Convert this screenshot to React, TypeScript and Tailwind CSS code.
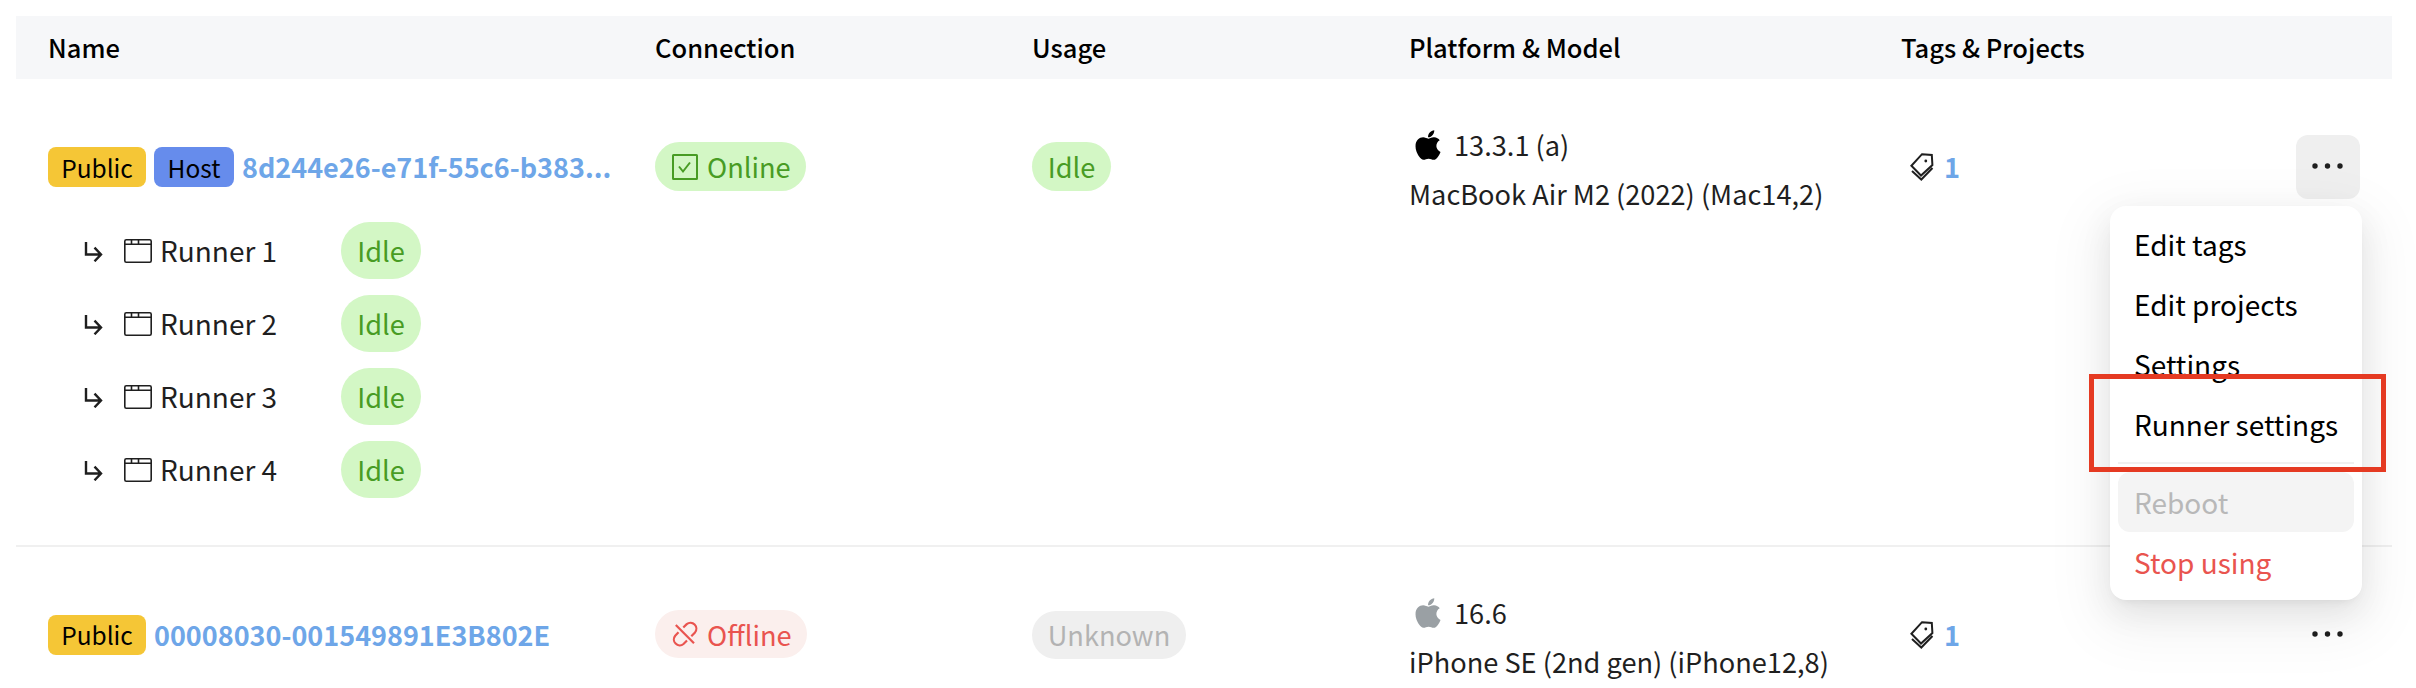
import React from "react";

type SvgProps = { className?: string };

const Apple = ({ className }: SvgProps) => (
  <svg className={className} viewBox="0 0 384 512" fill="currentColor">
    <path d="M318.700 268.700c-.2-36.700 16.400-64.400 50-84.800-18.800-26.900-47.200-41.700-84.700-44.600-35.500-2.800-74.300 20.700-88.500 20.700-15 0-49.400-19.700-76.400-19.700C63.300 141.200 4 184.800 4 273.500q0 39.300 14.400 81.200c12.800 36.700 59 126.700 107.200 125.200 25.200-.6 43-17.900 75.800-17.900 31.800 0 48.300 17.900 76.400 17.900 48.600-.7 90.400-82.500 102.600-119.300-65.200-30.700-61.700-90-61.700-91.900zm-56.600-164.200c27.300-32.400 24.800-61.900 24-72.500-24.100 1.400-52 16.400-67.900 34.900-17.500 19.800-27.800 44.300-25.600 71.900 26.100 2 49.900-11.400 69.500-34.300z" />
  </svg>
);

const Branch = ({ className }: SvgProps) => (
  <svg className={className} viewBox="0 0 20 20" fill="none" stroke="currentColor" strokeWidth="2.4">
    <path d="M2 0v12.500h15M10.500 5.700l6.500 6.800-6.500 6.800" />
  </svg>
);

const WindowIcon = ({ className }: SvgProps) => (
  <svg className={className} viewBox="0 0 28 24" fill="none" stroke="currentColor" strokeWidth="1.600">
    <rect x=".8" y=".8" width="26.400" height="22.400" rx="1.500" />
    <path d="M.8 5.200h26.400M7.500 .8v4.400M14.500 .8v4.400" />
  </svg>
);

const CheckSquare = ({ className }: SvgProps) => (
  <svg className={className} viewBox="0 0 26 26" fill="none" stroke="currentColor" strokeWidth="2">
    <rect x="1" y="1" width="24" height="24" rx=".5" />
    <path d="M7 12.500l4 5L18 8.500" />
  </svg>
);

const Unlink = ({ className }: SvgProps) => (
  <svg className={className} viewBox="0 0 26 26" fill="none" stroke="currentColor" strokeWidth="2.200">
    <path d="M3.800 4L22 22.300M11.300 6.500l3.400-3.400a5.900 5.900 0 0 1 8.300 8.300l-3.700 3.800M6.500 11.300l-3.300 3.400a5.900 5.900 0 0 0 8.300 8.300l3.500-3.500" />
  </svg>
);

const Tags = ({ className }: SvgProps) => (
  <svg className={className} viewBox="0 0 24 28" fill="none" stroke="currentColor" strokeWidth="2">
    <path d="M12 1.200l9.800.8.600 10L11 22.500 1.400 12.800zM2 18l9.300 8.500L22.500 15" />
    <circle cx="15.800" cy="8" r="1.400" fill="currentColor" stroke="none" />
  </svg>
);

const Dots = () => (
  <svg className="-mt-[3px] h-2 w-8" viewBox="0 0 32 8" fill="currentColor">
    <circle cx="3" cy="4" r="2.700" />
    <circle cx="15.500" cy="4" r="2.700" />
    <circle cx="28" cy="4" r="2.700" />
  </svg>
);

const cols = "grid grid-cols-[607px_377px_377px_492px_1fr] px-8";

const Badge = ({ children, className }: { children: React.ReactNode; className: string }) => (
  <span className={"flex h-10 shrink-0 items-center justify-center rounded-lg text-[24.500px] text-black " + className}>{children}</span>
);

const Pill = ({ children, className }: { children: React.ReactNode; className: string }) => (
  <span className={"inline-flex items-center rounded-full " + className}>{children}</span>
);

const TagCount = () => (
  <div className="flex h-[49px] items-center pl-[9px]">
    <Tags className="h-7 w-6" />
    <span className="ml-2.5 font-bold text-[#6ea6e8]">1</span>
  </div>
);

const itemCls = "flex h-[60px] items-center rounded-xl px-4";

export default function App() {
  return (
    <div className="h-[688px] w-[2416px] overflow-hidden bg-white px-4 pt-4 pr-6 font-['Noto_Sans_CJK_JP',sans-serif] text-[27.200px] leading-[49px] text-[#1f1f1f]">
      <div className={cols + " h-[63px] items-center bg-[#f6f7f9] pb-0.5 text-[25.500px] font-medium text-black"}>
        <div>Name</div>
        <div>Connection</div>
        <div>Usage</div>
        <div>Platform &amp; Model</div>
        <div>Tags &amp; Projects</div>
      </div>

      <div className={cols + " h-[468px] border-b-2 border-[#f0f0f0] pt-[63px]"}>
        <div>
          <div className="flex h-[50px] items-center gap-2">
            <Badge className="w-[98px] bg-[#f5c636]">Public</Badge>
            <Badge className="w-20 bg-[#668cec]">Host</Badge>
            <a className="-mt-px text-[27px] font-bold text-[#6ea6e8]">8d244e26-e71f-55c6-b383...</a>
          </div>
          <div className="mt-[30px] flex flex-col gap-4">
            {[1, 2, 3, 4].map((n) => (
              <div key={n} className="flex h-[57px] items-center pl-9">
                <Branch className="mt-[3px] h-5 w-5" />
                <WindowIcon className="ml-5 mt-px h-6 w-7" />
                <span className="ml-2 w-[181px] text-[28px]">Runner {n}</span>
                <Pill className="h-[57px] w-20 justify-center bg-[#d3f7c5] text-[#489c24]">Idle</Pill>
              </div>
            ))}
          </div>
        </div>
        <div>
          <Pill className="h-[49px] w-[151px] gap-[9px] bg-[#d3f7c5] pl-[17px] text-[#489c24]">
            <CheckSquare className="h-[26px] w-[26px] shrink-0" />
            Online
          </Pill>
        </div>
        <div>
          <Pill className="h-[49px] w-[79px] justify-center bg-[#d3f7c5] text-[#489c24]">Idle</Pill>
        </div>
        <div className="-mt-[22px]">
          <div className="flex items-center">
            <Apple className="ml-[3px] h-[34px] w-8 text-black" />
            <span className="ml-2.5">13.3.1 (a)</span>
          </div>
          <div>MacBook Air M2 (2022) (Mac14,2)</div>
        </div>
        <div className="relative flex items-start justify-between">
          <TagCount />
          <button className="-mt-[7px] flex h-16 w-16 items-center justify-center rounded-xl bg-[#efefef]">
            <Dots />
          </button>

          <div className="absolute right-[-2px] top-[64px] w-[252px] rounded-2xl bg-white p-2 text-[28px] text-black shadow-[0_12px_32px_rgba(0,0,0,0.08),0_6px_12px_-8px_rgba(0,0,0,0.12),0_18px_56px_16px_rgba(0,0,0,0.05)]">
            <div className={itemCls}>Edit tags</div>
            <div className={itemCls}>Edit projects</div>
            <div className={itemCls}>Settings</div>
            <div className={itemCls + " whitespace-nowrap"}>Runner settings</div>
            <div className="my-2 h-0.5 bg-[#f0f0f0]" />
            <div className={itemCls + " bg-[#f4f4f4] text-[#b8b8b8]"}>Reboot</div>
            <div className={itemCls + " text-[#e9544f]"}>Stop using</div>
          </div>
          <div className="absolute right-[-26px] top-[232px] h-[98px] w-[297px] border-[5px] border-[#e53a22]" />
        </div>
      </div>

      <div className={cols + " h-[141px] pt-[64px]"}>
        <div className="flex h-12 items-center gap-2">
          <Badge className="w-[98px] bg-[#f5c636] pb-px">Public</Badge>
          <a className="-mt-0.5 text-[27px] font-bold text-[#6ea6e8]">00008030-001549891E3B802E</a>
        </div>
        <div className="-mt-px">
          <Pill className="h-12 w-[152px] gap-[9px] bg-[#fbefed] pl-[17px] text-[#e9544f]">
            <Unlink className="h-[26px] w-[26px] shrink-0" />
            Offline
          </Pill>
        </div>
        <div className="-mt-px">
          <Pill className="h-12 w-[154px] justify-center bg-[#efefef] text-[#b3b3b3]">Unknown</Pill>
        </div>
        <div className="-mt-[23px]">
          <div className="flex items-center">
            <Apple className="ml-[3px] h-[34px] w-8 text-[#9aa0a4]" />
            <span className="ml-2.5">16.6</span>
          </div>
          <div>iPhone SE (2nd gen) (iPhone12,8)</div>
        </div>
        <div className="-mt-px flex items-start justify-between">
          <TagCount />
          <button className="-mt-[7px] flex h-16 w-16 items-center justify-center">
            <Dots />
          </button>
        </div>
      </div>
    </div>
  );
}
